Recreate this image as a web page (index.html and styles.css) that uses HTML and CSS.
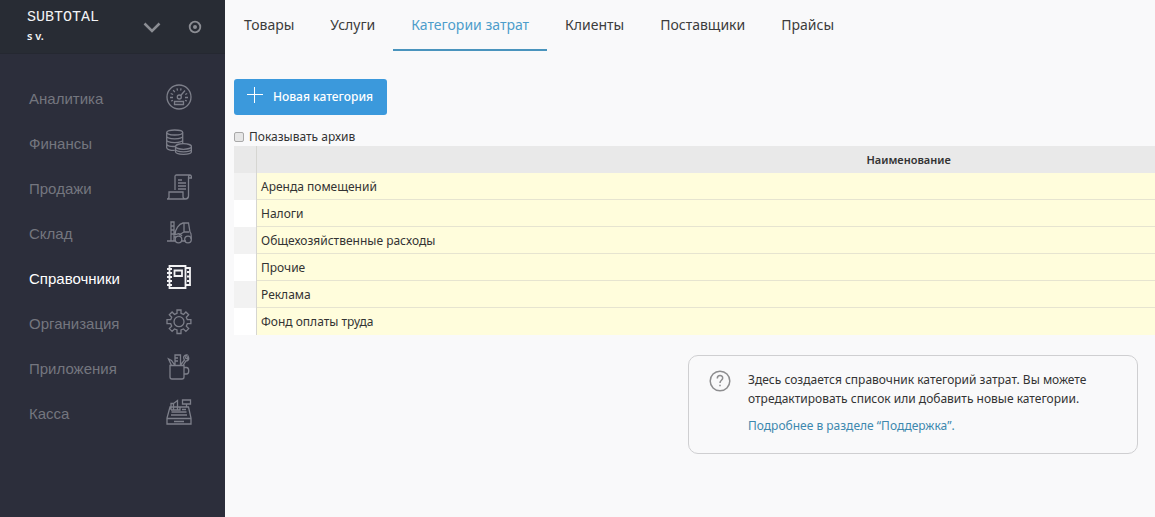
FILE: index.html
```html
<!DOCTYPE html>
<html lang="ru">
<head>
<meta charset="utf-8">
<meta name="viewport" content="width=device-width, initial-scale=1">
<title>Категории затрат</title>
<link rel="stylesheet" href="styles.css">
</head>
<body>
<div class="app">
  <aside class="sidebar">
    <header class="account">
      <div class="account-name">
        <div class="brand">SUBTOTAL</div>
        <div class="user">s v.</div>
      </div>
      <button class="icon-button" type="button" aria-label="Выбрать компанию">
        <svg width="18" height="12" viewBox="0 0 18 12"><path d="M1.500 2.500L9 10l7.500-7.500" stroke-width="2.500"/></svg>
      </button>
      <button class="icon-button" type="button" aria-label="Настройки">
        <svg width="14" height="14" viewBox="0 0 14 14"><circle cx="7" cy="7" r="5.300" stroke-width="1.800"/><circle cx="7" cy="7" r="2" fill="#8b8d93" stroke="none"/></svg>
      </button>
    </header>
    <nav class="menu">
      <a class="menu-item" href="#"><span>Аналитика</span>
        <svg class="menu-icon" viewBox="0 0 26 26"><circle cx="13" cy="13" r="12"/><circle cx="13.300" cy="13" r="2"/><path d="M14.700 11.500L19 6.500M8.500 17.500h9v3h-9zM4 13.500h3M4.700 9.500l2.400 1M7.200 6.200l1.600 1.900M11 4.400l.5 2.200M15 4.300l-.3 2.200M21.200 9.500l-2 1M22 13.500h-3M5 17l2-.6M21 17l-2-.6"/></svg>
      </a>
      <a class="menu-item" href="#"><span>Финансы</span>
        <svg class="menu-icon" viewBox="0 0 26 26"><ellipse cx="8.700" cy="3.500" rx="8" ry="2.500"/><path d="M.7 3.500v15.300c0 1.800 4 2.700 8 2.600M16.700 3.500v11M.7 7.300c0 3.300 16 3.300 16 0M.7 11.100c0 3.300 16 3.300 16 0M.7 15c0 2 4 2.800 9 2.400"/><ellipse cx="17.500" cy="17.500" rx="8" ry="2.800"/><path d="M9.500 17.500v5c0 3.700 16 3.700 16 0v-5M9.500 20c0 3.700 16 3.700 16 0"/></svg>
      </a>
      <a class="menu-item" href="#"><span>Продажи</span>
        <svg class="menu-icon" viewBox="0 0 26 26"><path d="M9 16V2.500c0-1 .6-1.500 1.500-1.500H24c-1 .2-1.500 1-1.500 2v19c0 2-1.500 3-3 3H1c1.500 0 2-1 2-2.500V18h14v4.500c0 3.200 4 3.200 5.500 0M24 1c1 0 1.500 1 1.500 3h-3M12 6h4M12 9h8M12 12h8M12 15h8"/></svg>
      </a>
      <a class="menu-item" href="#"><span>Склад</span>
        <svg class="menu-icon" viewBox="0 0 26 26"><path d="M5 3h3v19H5zM1 22h8M8 18h2M20 22h-4M9 16c0-6 4-11 8-12h5.500l1.500 9c1.500 1 1.500 3 1 7M18 4v9l-5 3M9 16c3-2 5-2 7 1M18 13h5M5 7h3M5 11h3M5 15h3"/><circle cx="12.500" cy="20.500" r="3.300"/><circle cx="22" cy="20.500" r="3.300"/></svg>
      </a>
      <a class="menu-item active" href="#" aria-current="page"><span>Справочники</span>
        <svg class="menu-icon bold" viewBox="0 0 26 26"><path d="M3.500 2h16v22h-16zM8.500 6.500h7.500v5.500H8.500zM19.500 4h4.500v17h-4.500M21 8h3M21 12.500h3M21 17h3M1 5h5M1 9h5M1 13h5M1 17h5M1 21h5"/></svg>
      </a>
      <a class="menu-item" href="#"><span>Организация</span>
        <svg class="menu-icon" viewBox="0 0 26 26"><path d="M11 1h4v3.400l2.500 1 2.400-2.400 2.800 2.800-2.400 2.400 1 2.500h3.600v4h-3.600l-1 2.500 2.400 2.400-2.800 2.800-2.400-2.400-2.500 1V24.500h-4V21l-2.500-1-2.400 2.400-2.800-2.800 2.400-2.400-1-2.500H1v-4h3.700l1-2.500-2.400-2.400 2.800-2.800 2.400 2.400 2.500-1z"/><circle cx="13" cy="12.700" r="5"/></svg>
      </a>
      <a class="menu-item" href="#"><span>Приложения</span>
        <svg class="menu-icon" viewBox="0 0 26 26"><path d="M4 11.500h14V23c0 1.500-.7 2-2 2H6c-1.300 0-2-.5-2-2zM18 13.500h2.500c3 0 3 6.500 0 6.500H18M5.500 11.500L2.500 5l3 1.500 3.500 5M9 11V1h5.500v10M9 4h3M9 7h3M14.500 11l4-5c-2-3 0-5 2-5l-1 3 2 1 .5-3c1.500 3 .5 5-2 5L17 11.500"/></svg>
      </a>
      <a class="menu-item" href="#"><span>Касса</span>
        <svg class="menu-icon" viewBox="0 0 26 26"><path d="M4 8h18.500l2.500 11v6H1v-6zM1 19.500h24M8 22.500h10M5.500 13h15M5 16h16M16.500 1h8v4h-8zM20.500 5v3M5 11V4.500h2.500V11M7.500 4.500L11.500 1.500V11M14 8v3H5M16 10.500h4"/></svg>
      </a>
    </nav>
  </aside>
  <main class="content">
    <nav class="tabs">
      <a class="tab" href="#">Товары</a>
      <a class="tab" href="#">Услуги</a>
      <a class="tab current" href="#" aria-current="page">Категории затрат</a>
      <a class="tab" href="#">Клиенты</a>
      <a class="tab" href="#">Поставщики</a>
      <a class="tab" href="#">Прайсы</a>
    </nav>
    <section class="catalog">
      <button class="new-category" type="button">
        <svg width="16" height="16" viewBox="0 0 16 16"><path d="M7.500 0v16M0 7.500h16"/></svg>
        <span>Новая категория</span>
      </button>
      <label class="archive" for="archive"><input type="checkbox" id="archive"><span>Показывать архив</span></label>
      <div class="table-view">
        <table class="categories">
          <thead><tr><th class="mark"></th><th>Наименование</th></tr></thead>
          <tbody>
            <tr><td class="mark"></td><td>Аренда помещений</td></tr>
            <tr><td class="mark"></td><td>Налоги</td></tr>
            <tr><td class="mark"></td><td>Общехозяйственные расходы</td></tr>
            <tr><td class="mark"></td><td>Прочие</td></tr>
            <tr><td class="mark"></td><td>Реклама</td></tr>
            <tr><td class="mark"></td><td>Фонд оплаты труда</td></tr>
          </tbody>
        </table>
      </div>
    </section>
    <aside class="hint">
      <svg class="hint-icon" width="22" height="22" viewBox="0 0 22 22"><circle cx="11" cy="11" r="9.800"/><path d="M8.300 8.500c0-3.800 5.400-3.800 5.400-.4 0 2.200-2.700 2.200-2.700 4.800M11 14.800v1.500"/></svg>
      <div>
        <p>Здесь создается справочник категорий затрат. Вы можете<br>отредактировать список или добавить новые категории.</p>
        <a href="#">Подробнее в разделе “Поддержка”.</a>
      </div>
    </aside>
  </main>
</div>
</body>
</html>
```
FILE: styles.css
```css
* { box-sizing: border-box; }
body {
  margin: 0;
  background: #f9f9fa;
  color: #333;
  font: 12px/18px "Noto Sans", "Open Sans", sans-serif;
}
a { text-decoration: none; }
button { border: 0; padding: 0; cursor: pointer; }
svg { fill: none; flex: none; }
.app { display: flex; min-height: 100vh; }

.sidebar { flex: 0 0 225px; background: #2c2e3b; }
.account {
  display: flex;
  align-items: center;
  gap: 27px;
  height: 54px;
  padding: 0 23px 0 27px;
  background: #282c34;
  border-bottom: 1px solid #252831;
  color: #f2f3f5;
}
.account-name { flex: 1; }
.brand { font: 15px/18px "Liberation Mono", monospace; }
.user { font-size: 11px; line-height: 18px; font-weight: 600; }
.icon-button { display: flex; background: none; }
.icon-button svg { stroke: #8b8d93; }

.menu { padding-top: 22px; }
.menu-item {
  display: flex;
  align-items: center;
  justify-content: space-between;
  height: 45px;
  padding: 0 33px 0 29px;
  color: #74767f;
  font: 15px/18px "Liberation Sans", Arial, sans-serif;
}
.menu-item.active { color: #fff; }
.menu-icon { width: 26px; height: 26px; margin-bottom: 4px; stroke: #7d7f8a; stroke-width: 1.300; }
.menu-icon.bold { stroke: #f2f2f4; stroke-width: 1.800; }

.content { flex: 1; min-width: 0; }
.tabs { display: flex; padding-left: 1px; }
.tab {
  padding: 16px 18px 15px;
  border-bottom: 2px solid transparent;
  color: #3c3c3c;
  font-size: 14px;
}
.tab.current { color: #4d9dcb; border-color: #4a94bd; }

.catalog { padding: 28px 0 0 9px; }
.new-category {
  display: flex;
  align-items: center;
  gap: 10px;
  height: 36px;
  padding: 0 14px 0 13px;
  border-radius: 3px;
  background: #3b99dc;
  color: #fff;
  font: 500 12px/18px "Noto Sans", "Open Sans", sans-serif;
}
.new-category svg { margin-bottom: 4px; stroke: #fff; stroke-width: 1; }
.archive { display: flex; align-items: center; width: max-content; gap: 5px; margin-top: 13px; }
.archive input {
  appearance: none;
  width: 10px;
  height: 10px;
  margin: 0;
  border: 1px solid #a9a9a9;
  border-radius: 2px;
  background: #e6e6e6;
}
.archive input:checked { background: #3b99dc; }
.table-view { overflow: hidden; }
.categories { width: 144%; border-collapse: separate; border-spacing: 0; }
.categories th, .categories td { height: 27px; padding: 2px 4px 0; }
.categories th { padding-top: 0; background: #e9e9e9; font-size: 11px; font-weight: 600; }
.categories td { background: #fffddc; border-bottom: 1px solid #e6e4d0; text-align: left; }
.categories .mark { width: 23px; padding: 0; border-right: 1px solid #d6d6d2; }
.categories td.mark { background: #fff; border-bottom: 0; }
.categories tr:nth-child(odd) td.mark { background: #f2f2f2; }
.categories tr:last-child td { border-bottom-color: transparent; }

.hint {
  display: flex;
  gap: 17px;
  width: 450px;
  max-width: 100%;
  margin: 20px 17px 20px auto;
  padding: 14px 20px 18px;
  border: 1px solid #cfcfd1;
  border-radius: 10px;
}
.hint-icon { stroke: #8d8d8f; stroke-width: 1.500; }
.hint p { margin: 0 0 9px; line-height: 19px; }
.hint a { color: #3d88ae; }
```
